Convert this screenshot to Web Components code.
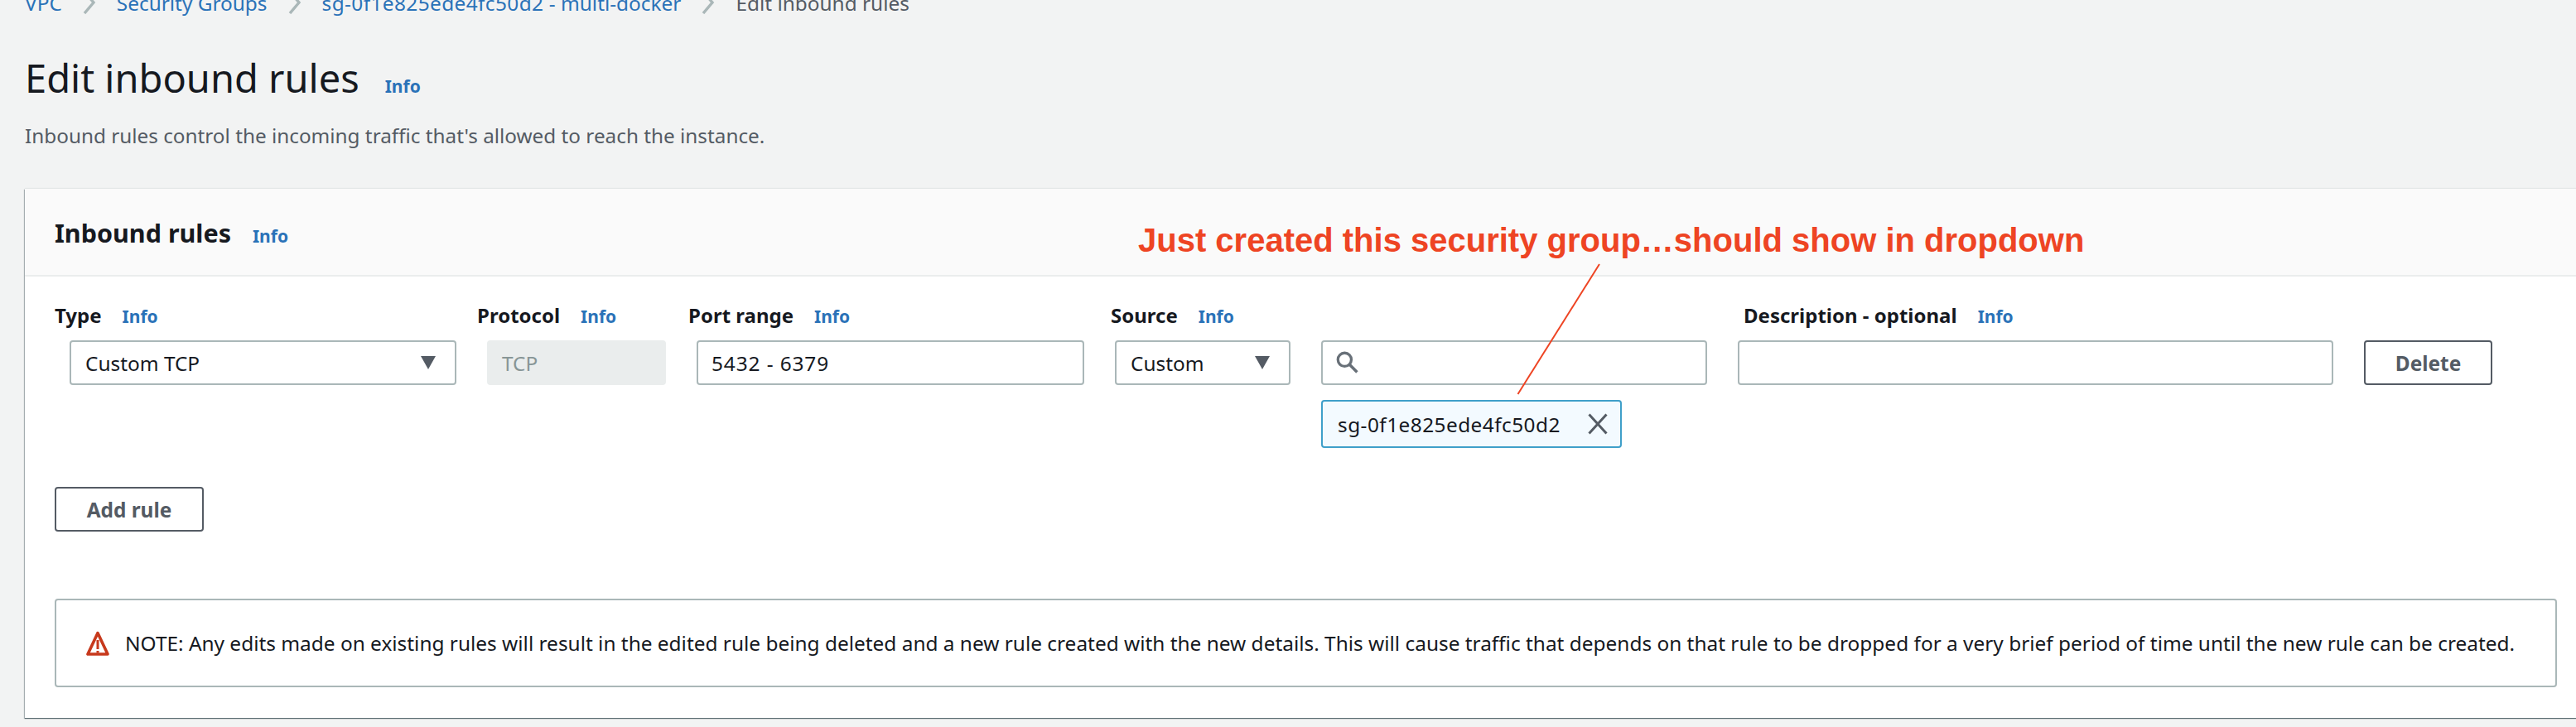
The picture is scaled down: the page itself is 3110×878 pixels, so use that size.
<!DOCTYPE html>
<html>
<head>
<meta charset="utf-8">
<title>Edit inbound rules</title>
<style>
    html, body { margin: 0; padding: 0; height: 100%; overflow: hidden; background: #f2f3f3; }
    body { font-family: "Noto Sans", "Open Sans", sans-serif; color: #16191f; }
</style>
</head>
<body>
<console-page>
    <page-breadcrumb slot="crumbs"></page-breadcrumb>
    <rules-card></rules-card>
</console-page>

<script>
(function () {
    const baseFont = `font-family: "Noto Sans", "Open Sans", sans-serif;`;

    class InfoLink extends HTMLElement {
        connectedCallback() {
            this.attachShadow({ mode: 'open' });
            this.shadowRoot.innerHTML = `
                <style>
                    :host { display: inline-block; color: #2a72b8; font-size: 21px; font-weight: 700; ${baseFont} }
                </style>
                Info
            `;
        }
    }

    class PageBreadcrumb extends HTMLElement {
        connectedCallback() {
            const crumbs = ['VPC', 'Security Groups', '<span class="hex">sg-0f1e825ede4fc50d2</span> - multi-docker'];
            const chevron = `<svg width="18" height="28" viewBox="0 0 18 28"><path d="M3 1l11 13L3 27" fill="none" stroke="#aab7b8" stroke-width="3.4"/></svg>`;

            this.attachShadow({ mode: 'open' });
            this.shadowRoot.innerHTML = `
                <style>
                    :host { display: flex; align-items: center; gap: 24px; height: 32px; margin-top: -13px; font-size: 24.4px; color: #545b64; ${baseFont} }
                    a { color: #2a72b8; text-decoration: none; }
                    .hex { letter-spacing: 0.4px; }
                    svg { display: block; }
                </style>
                ${crumbs.map((crumb) => `<a href="#">${crumb}</a>${chevron}`).join('')}
                <span>Edit inbound rules</span>
            `;
        }
    }

    class RuleSelect extends HTMLElement {
        connectedCallback() {
            this.attachShadow({ mode: 'open' });
            this.shadowRoot.innerHTML = `
                <style>
                    :host { display: flex; align-items: center; justify-content: space-between; box-sizing: border-box; height: 54px; padding: 0 23px 0 17px; background: #fff; border: 2px solid #aab7b8; border-radius: 4px; font-size: 24.4px; color: #16191f; ${baseFont} }
                    i { width: 0; height: 0; border-left: 9.5px solid transparent; border-right: 9.5px solid transparent; border-top: 16px solid #545b64; }
                </style>
                <slot></slot><i></i>
            `;
        }
    }

    class RuleInput extends HTMLElement {
        connectedCallback() {
            this.attachShadow({ mode: 'open' });
            this.shadowRoot.innerHTML = `
                <style>
                    :host { display: flex; align-items: center; gap: 10px; box-sizing: border-box; height: 54px; padding: 0 16px; background: #fff; border: 2px solid #aab7b8; border-radius: 4px; font-size: 24.4px; color: #16191f; ${baseFont} }
                    :host([disabled]) { background: #eaeded; border-color: #eaeded; color: #879596; }
                    svg { display: block; }
                </style>
                <slot name="icon"></slot><slot></slot>
            `;
        }
    }

    class RuleButton extends HTMLElement {
        connectedCallback() {
            this.attachShadow({ mode: 'open' });
            this.shadowRoot.innerHTML = `
                <style>
                    :host { display: flex; align-items: center; justify-content: center; box-sizing: border-box; height: 54px; background: #fff; border: 2px solid #545b64; border-radius: 4px; font-size: 24.4px; font-weight: 700; color: #545b64; ${baseFont} }
                </style>
                <slot></slot>
            `;
        }
    }

    class TokenChip extends HTMLElement {
        connectedCallback() {
            this.attachShadow({ mode: 'open' });
            this.shadowRoot.innerHTML = `
                <style>
                    :host { display: flex; align-items: center; justify-content: space-between; box-sizing: border-box; width: 363px; height: 58px; padding: 0 15px 0 18px; background: #f3faff; border: 2px solid #3f9fc9; border-radius: 4px; font-size: 24.4px; letter-spacing: 0.45px; color: #16191f; ${baseFont} }
                    svg { display: block; }
                </style>
                <slot></slot>
                <svg width="24" height="26" viewBox="0 0 24 26"><path d="M1.500 1.500l21 23M22.500 1.500l-21 23" fill="none" stroke="#545b64" stroke-width="3"/></svg>
            `;
        }
    }

    class NoteBox extends HTMLElement {
        connectedCallback() {
            this.attachShadow({ mode: 'open' });
            this.shadowRoot.innerHTML = `
                <style>
                    :host { display: flex; align-items: center; gap: 19px; box-sizing: border-box; height: 107px; padding: 0 0 0 36px; background: #fff; border: 2px solid #aab7b8; border-radius: 4px; font-size: 24.42px; color: #16191f; white-space: nowrap; ${baseFont} }
                    svg { display: block; flex: none; }
                </style>
                <svg width="28" height="30" viewBox="0 0 28 30">
                    <path d="M14 2.500L2 28h24z" fill="none" stroke="#c7391c" stroke-width="3.600" stroke-linejoin="round"/>
                    <path d="M14 11v11M14 24v2.500" fill="none" stroke="#c7391c" stroke-width="3"/>
                </svg>
                <slot></slot>
            `;
        }
    }

    class RulesCard extends HTMLElement {
        connectedCallback() {
            this.attachShadow({ mode: 'open' });
            this.shadowRoot.innerHTML = `
                <style>
                    :host { display: block; position: relative; width: 3200px; height: 639px; margin-top: 47px; background: #fff; box-shadow: 0 1px 1px 0 rgba(0,28,36,.5), -1px 1px 1px 0 rgba(0,28,36,.25), 0 -1px 1px 0 rgba(0,28,36,.06); ${baseFont} }
                    header { display: flex; align-items: baseline; gap: 26px; box-sizing: border-box; height: 106px; padding: 32px 0 0 36px; background: #fafafa; border-bottom: 2px solid #eaeded; }
                    h2 { margin: 0; font-size: 30.500px; font-weight: 700; color: #16191f; }
                    .labels { display: grid; grid-template-columns: 510px 255px 510px 764px auto; padding: 30px 0 0 36px; height: 47px; }
                    .labels span { display: flex; align-items: baseline; gap: 25px; font-size: 24px; font-weight: 700; color: #16191f; }
                    .controls { display: flex; align-items: flex-start; gap: 37px; padding: 0 0 0 54px; }
                    .search-col { display: flex; flex-direction: column; gap: 18px; width: 466px; }
                    .digits { letter-spacing: 0.9px; }
                    .add { width: 180px; margin: 47px 0 0 36px; }
                    note-box { width: 3021px; margin: 81px 0 0 36px; }
                    .callout { position: absolute; left: 1344px; top: 38px; margin: 0; font: 700 40px/48px "Liberation Sans", Arial, sans-serif; color: #ee4423; white-space: nowrap; }
                    .pointer { position: absolute; left: 0; top: 0; pointer-events: none; }
                </style>
                <header><h2>Inbound rules</h2><info-link></info-link></header>
                <div class="labels">
                    <span>Type <info-link></info-link></span>
                    <span>Protocol <info-link></info-link></span>
                    <span>Port range <info-link></info-link></span>
                    <span>Source <info-link></info-link></span>
                    <span>Description - optional <info-link></info-link></span>
                </div>
                <div class="controls">
                    <rule-select style="width:467px">Custom TCP</rule-select>
                    <rule-input disabled style="width:216px">TCP</rule-input>
                    <rule-input style="width:468px"><span class="digits">5432 - 6379</span></rule-input>
                    <rule-select style="width:212px">Custom</rule-select>
                    <div class="search-col">
                        <rule-input>
                            <svg slot="icon" width="28" height="28" viewBox="0 0 27 27"><circle cx="10" cy="10" r="7.800" fill="none" stroke="#687078" stroke-width="3.200"/><path d="M15.500 15.500l9 9" fill="none" stroke="#687078" stroke-width="3.400"/></svg>
                        </rule-input>
                        <token-chip>sg-0f1e825ede4fc50d2</token-chip>
                    </div>
                    <rule-input style="width:719px"></rule-input>
                    <rule-button style="width:155px">Delete</rule-button>
                </div>
                <rule-button class="add">Add rule</rule-button>
                <note-box>NOTE: Any edits made on existing rules will result in the edited rule being deleted and a new rule created with the new details. This will cause traffic that depends on that rule to be dropped for a very brief period of time until the new rule can be created.</note-box>
                <p class="callout">Just created this security group…should show in dropdown</p>
                <svg class="pointer" width="2000" height="300"><path d="M1901 91L1802.500 248" stroke="#ee4423" stroke-width="2" fill="none"/></svg>
            `;
        }
    }

    class ConsolePage extends HTMLElement {
        connectedCallback() {
            this.attachShadow({ mode: 'open' });
            this.shadowRoot.innerHTML = `
                <style>
                    :host { display: block; padding: 0 0 0 30px; ${baseFont} }
                    .title { display: flex; align-items: baseline; gap: 31px; margin-top: 42px; height: 66px; }
                    h1 { margin: 0; font-size: 47px; line-height: 66px; font-weight: 400; color: #16191f; }
                    p { margin: 20px 0 0; font-size: 24.3px; line-height: 34px; color: #545b64; }
                </style>
                <slot name="crumbs"></slot>
                <div class="title"><h1>Edit inbound rules</h1><info-link></info-link></div>
                <p>Inbound rules control the incoming traffic that's allowed to reach the instance.</p>
                <slot></slot>
            `;
        }
    }

    customElements.define('info-link', InfoLink);
    customElements.define('page-breadcrumb', PageBreadcrumb);
    customElements.define('rule-select', RuleSelect);
    customElements.define('rule-input', RuleInput);
    customElements.define('rule-button', RuleButton);
    customElements.define('token-chip', TokenChip);
    customElements.define('note-box', NoteBox);
    customElements.define('rules-card', RulesCard);
    customElements.define('console-page', ConsolePage);
})();
</script>
</body>
</html>
